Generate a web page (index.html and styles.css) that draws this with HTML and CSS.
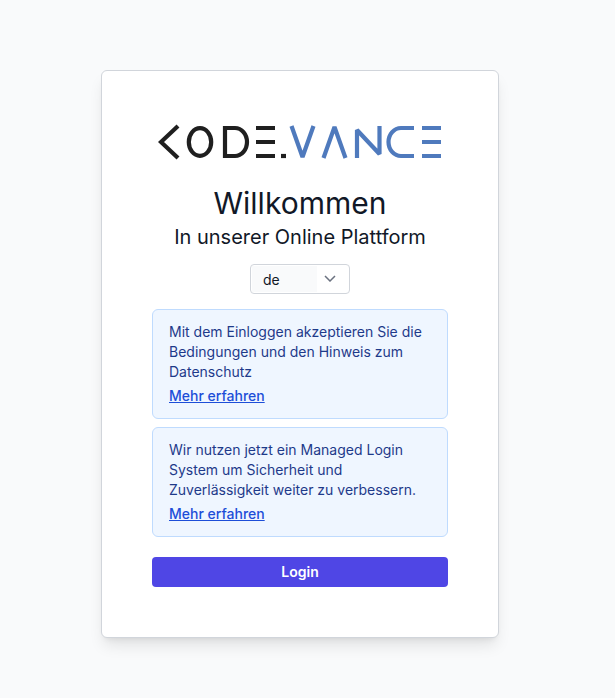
FILE: index.html
```html
<!DOCTYPE html>
<html lang="de">
<head>
    <meta charset="UTF-8">
    <meta name="viewport" content="width=device-width, initial-scale=1.0">
    <title>Login</title>
    <link rel="stylesheet" href="styles.css">
</head>
<body>

    <div class="login-card">
        <!-- Logo -->
        <svg class="logo" width="284" height="36" viewBox="159 123 284 36" fill="none" stroke-width="4.2" role="img" aria-label="KODE.VANCE">
            <g stroke="#1f1f1f">
                <path d="M179 125 L162 141 L179 157"/>
                <ellipse cx="201" cy="141" rx="11.2" ry="13.8"/>
                <path d="M226 127 H236 A12 14 0 0 1 236 155 H226 Z"/>
                <path d="M257 127 H276 M257 141 H276 M257 155 H276"/>
                <path d="M282 155 H287"/>
            </g>
            <g stroke="#4f7abd" stroke-linejoin="bevel">
                <path d="M292.5 125 L303.5 156 L314.5 125"/>
                <path d="M324.5 157 L335.5 126 L346.5 157"/>
                <path d="M358 157 V129 L380.5 153 V125"/>
                <path d="M415 127 H402 A12.5 14 0 0 0 402 155 H415"/>
                <path d="M423 127 H442 M423 141 H442 M423 155 H442"/>
            </g>
        </svg>

        <h1>Willkommen</h1>
        <h2>In unserer Online Plattform</h2>

        <div class="lang-select">
            <span class="lang-value">de</span>
            <svg class="lang-arrow" width="12" height="7" viewBox="0 0 12 7" fill="none" stroke="#6b7280" stroke-width="1.5">
                <path d="M1 1 L6 6 L11 1"/>
            </svg>
        </div>

        <div class="info-box">
            <p>Mit dem Einloggen akzeptieren Sie die Bedingungen und den Hinweis zum Datenschutz</p>
            <a href="#">Mehr erfahren</a>
        </div>

        <div class="info-box">
            <p>Wir nutzen jetzt ein Managed Login System um Sicherheit und Zuverlässigkeit weiter zu verbessern.</p>
            <a href="#">Mehr erfahren</a>
        </div>

        <button type="button" class="login-button">Login</button>
    </div>

</body>
</html>
```

FILE: styles.css
```css
/* Basic Styling */
body {
    margin: 0;
    min-height: 698px;
    box-sizing: border-box;
    padding-top: 70px;
    font-family: Inter, "Liberation Sans", sans-serif;
    background-color: #f9fafb;
    color: #111827;
}
/* Card */
.login-card {
    box-sizing: border-box;
    width: 398px;
    height: 568px;
    margin-left: 101px;
    padding: 53px 50px 0;
    display: flex;
    flex-direction: column;
    align-items: center;
    background-color: #fff;
    border: 1px solid #d1d5db;
    border-radius: 6px;
    box-shadow: 0 10px 15px -3px rgba(0, 0, 0, 0.1), 0 4px 6px -4px rgba(0, 0, 0, 0.1);
}
.logo {
    display: block;
}
h1 {
    margin: 25px 0 0;
    font-size: 30px;
    line-height: 36px;
    font-weight: 400;
}
h2 {
    margin: 2px 0 0;
    font-size: 20px;
    line-height: 28px;
    font-weight: 400;
}
/* Language select */
.lang-select {
    box-sizing: border-box;
    width: 100px;
    height: 30px;
    margin-top: 13px;
    display: flex;
    align-items: center;
    border: 1px solid #d1d5db;
    border-radius: 4px;
    background-color: #fff;
}
.lang-value {
    box-sizing: border-box;
    width: 65px;
    height: 26px;
    margin-left: 1px;
    padding: 1px 0 0 11px;
    font-size: 14px;
    line-height: 26px;
    background-color: #f9fafb;
}
.lang-arrow {
    margin-left: 7px;
    margin-bottom: 2px;
}
/* Info boxes */
.info-box {
    box-sizing: border-box;
    width: 296px;
    height: 110px;
    margin-top: 15px;
    padding: 12px 16px 0;
    background-color: #eff6ff;
    border: 1px solid #bfdbfe;
    border-radius: 6px;
    font-size: 14px;
    line-height: 20px;
    color: #1e3a8a;
}
.info-box + .info-box {
    margin-top: 8px;
}
.info-box p {
    margin: 0 0 4px;
}
.info-box a {
    color: #1d4ed8;
    font-weight: 500;
    text-decoration: underline;
}
.login-button {
    width: 296px;
    height: 30px;
    margin-top: 20px;
    padding: 0 0 2px;
    border: none;
    border-radius: 4px;
    background-color: #4f46e5;
    color: #fff;
    font-family: inherit;
    font-size: 14px;
    font-weight: 600;
}
```
